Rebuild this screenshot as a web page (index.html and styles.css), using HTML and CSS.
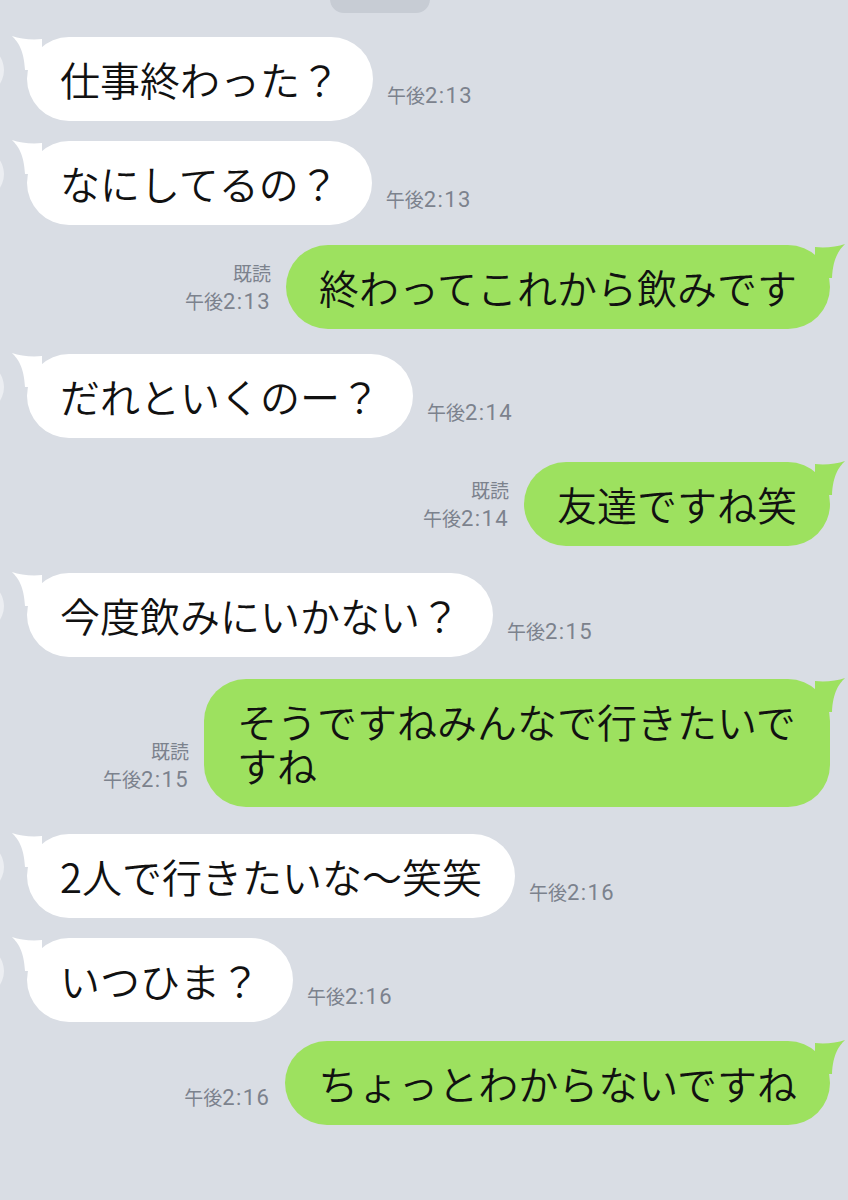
FILE: index.html
```html
<!DOCTYPE html>
<html lang="ja">
<head>
<meta charset="utf-8">
<title>LINE</title>
<link rel="stylesheet" href="styles.css">
</head>
<body>
<div class="chat">
  <div class="chip"></div>

  <div class="row in">
    <span class="avatar"></span>
    <div class="bubble white"><svg class="tail" viewBox="0 0 30 34"><path d="M30 3 C20 4 8 3 0 0 C6 6 12 14 13 34 L30 34 Z"/></svg>仕事終わった？</div>
    <div class="meta"><span>午後<span class="n">2:13</span></span></div>
  </div>

  <div class="row in g20">
    <span class="avatar"></span>
    <div class="bubble white"><svg class="tail" viewBox="0 0 30 34"><path d="M30 3 C20 4 8 3 0 0 C6 6 12 14 13 34 L30 34 Z"/></svg>なにしてるの？</div>
    <div class="meta"><span>午後<span class="n">2:13</span></span></div>
  </div>

  <div class="row out g20">
    <div class="meta"><span>既読</span><span>午後<span class="n">2:13</span></span></div>
    <div class="bubble green"><svg class="tail" viewBox="0 0 30 34"><path d="M0 3 C10 4 22 3 30 0 C24 6 18 14 17 34 L0 34 Z"/></svg>終わってこれから飲みです</div>
  </div>

  <div class="row in g25">
    <span class="avatar"></span>
    <div class="bubble white"><svg class="tail" viewBox="0 0 30 34"><path d="M30 3 C20 4 8 3 0 0 C6 6 12 14 13 34 L30 34 Z"/></svg>だれといくのー？</div>
    <div class="meta"><span>午後<span class="n">2:14</span></span></div>
  </div>

  <div class="row out g24">
    <div class="meta"><span>既読</span><span>午後<span class="n">2:14</span></span></div>
    <div class="bubble green"><svg class="tail" viewBox="0 0 30 34"><path d="M0 3 C10 4 22 3 30 0 C24 6 18 14 17 34 L0 34 Z"/></svg>友達ですね笑</div>
  </div>

  <div class="row in g27">
    <span class="avatar"></span>
    <div class="bubble white"><svg class="tail" viewBox="0 0 30 34"><path d="M30 3 C20 4 8 3 0 0 C6 6 12 14 13 34 L30 34 Z"/></svg>今度飲みにいかない？</div>
    <div class="meta"><span>午後<span class="n">2:15</span></span></div>
  </div>

  <div class="row out g22">
    <div class="meta"><span>既読</span><span>午後<span class="n">2:15</span></span></div>
    <div class="bubble green"><svg class="tail" viewBox="0 0 30 34"><path d="M0 3 C10 4 22 3 30 0 C24 6 18 14 17 34 L0 34 Z"/></svg>そうですねみんなで行きたいですね</div>
  </div>

  <div class="row in g27">
    <span class="avatar"></span>
    <div class="bubble white"><svg class="tail" viewBox="0 0 30 34"><path d="M30 3 C20 4 8 3 0 0 C6 6 12 14 13 34 L30 34 Z"/></svg>2人で行きたいな〜笑笑</div>
    <div class="meta"><span>午後<span class="n">2:16</span></span></div>
  </div>

  <div class="row in g20">
    <span class="avatar"></span>
    <div class="bubble white"><svg class="tail" viewBox="0 0 30 34"><path d="M30 3 C20 4 8 3 0 0 C6 6 12 14 13 34 L30 34 Z"/></svg>いつひま？</div>
    <div class="meta"><span>午後<span class="n">2:16</span></span></div>
  </div>

  <div class="row out g19">
    <div class="meta"><span>午後<span class="n">2:16</span></span></div>
    <div class="bubble green"><svg class="tail" viewBox="0 0 30 34"><path d="M0 3 C10 4 22 3 30 0 C24 6 18 14 17 34 L0 34 Z"/></svg>ちょっとわからないですね</div>
  </div>
</div>
</body>
</html>
```

FILE: styles.css
```css
html, body {
  margin: 0;
  padding: 0;
}
body {
  width: 848px;
  height: 1200px;
  overflow: hidden;
  background: #d9dde4;
  font-family: "Noto Sans CJK JP", sans-serif;
}
.chat {
  display: flex;
  flex-direction: column;
}
.chip {
  width: 100px;
  height: 28px;
  margin-top: -15px;
  margin-left: 330px;
  border-radius: 14px;
  background: #c7ccd4;
}
.row {
  position: relative;
  display: flex;
  align-items: flex-end;
  margin-top: 24px;
}
.row.in {
  padding-left: 27px;
  gap: 14px;
  justify-content: flex-start;
}
.row.out {
  padding-right: 18px;
  gap: 15px;
  justify-content: flex-end;
}
.g19 { margin-top: 19px; }
.g20 { margin-top: 20px; }
.g22 { margin-top: 22px; }
.g24 { margin-top: 24px; }
.g25 { margin-top: 25px; }
.g27 { margin-top: 27px; }

.avatar {
  position: absolute;
  left: -46px;
  top: 8px;
  width: 50px;
  height: 50px;
  border-radius: 50%;
  background: #eceef2;
}
.bubble {
  position: relative;
  max-width: 560px;
  padding: 20px 33px;
  border-radius: 42px;
  font-size: 40px;
  line-height: 44px;
  font-weight: 350;
  color: #111111;
  word-break: break-all;
}
.bubble.white {
  background: #ffffff;
}
.bubble.green {
  background: #9de15f;
}
.tail {
  position: absolute;
  top: -1px;
  width: 30px;
  height: 34px;
}
.white .tail {
  left: -15px;
  fill: #ffffff;
}
.green .tail {
  right: -15px;
  fill: #9de15f;
}
.meta {
  display: flex;
  flex-direction: column;
  font-size: 19px;
  line-height: 28px;
  color: #7c828d;
  white-space: nowrap;
}
.in .meta {
  align-items: flex-start;
  margin-bottom: 11px;
}
.out .meta {
  align-items: flex-end;
  margin-bottom: 13px;
}
.n {
  font-family: "Roboto", sans-serif;
  font-size: 22px;
  letter-spacing: 1.4px;
}
```
